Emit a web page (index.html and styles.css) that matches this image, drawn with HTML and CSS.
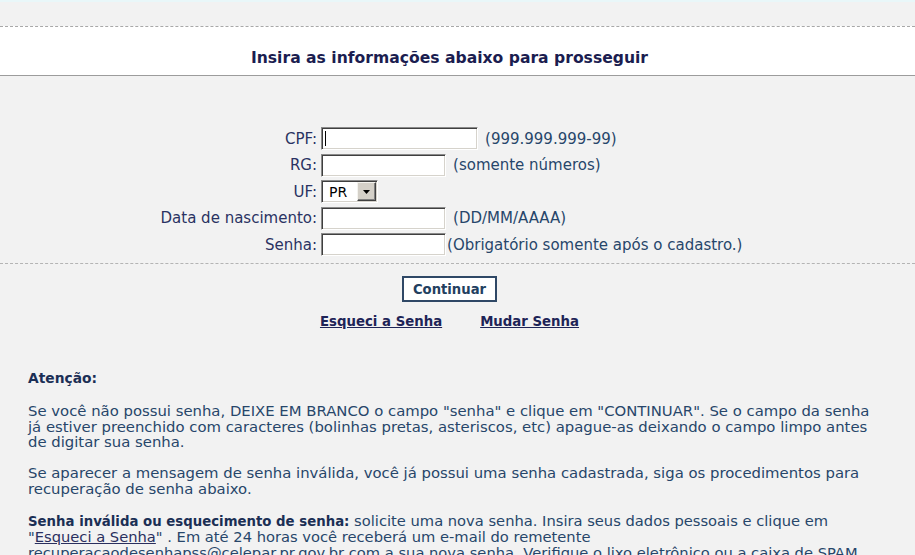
FILE: index.html
```html
<!DOCTYPE html>
<html lang="pt-BR">
<head>
<meta charset="utf-8">
<title>Identificação</title>
<link rel="stylesheet" href="styles.css">
</head>
<body>
<div class="topline"></div>
<div class="page">
  <div class="header">
    <h1 class="title">Insira as informações abaixo para prosseguir</h1>
  </div>

  <form class="form">
    <div class="fields">
      <label class="label" for="cpf">CPF:</label>
      <div class="field"><span class="caret-wrap"><input id="cpf" class="input input-cpf" type="text"></span><span class="hint hint-spaced">(999.999.999-99)</span></div>

      <label class="label" for="rg">RG:</label>
      <div class="field"><input id="rg" class="input input-short" type="text"><span class="hint hint-spaced">(somente números)</span></div>

      <label class="label" for="uf">UF:</label>
      <div class="field">
        <span class="select">
          <select id="uf" class="select-native"><option>PR</option></select>
          <span class="select-btn"><svg width="7" height="4" viewBox="0 0 7 4"><path d="M0 0h7L3.5 4z" fill="#000"/></svg></span>
        </span>
      </div>

      <label class="label" for="nasc">Data de nascimento:</label>
      <div class="field"><input id="nasc" class="input input-short" type="text"><span class="hint hint-spaced">(DD/MM/AAAA)</span></div>

      <label class="label" for="senha">Senha:</label>
      <div class="field"><input id="senha" class="input input-short" type="password"><span class="hint">(Obrigatório somente após o cadastro.)</span></div>
    </div>

    <div class="divider"></div>

    <div class="actions">
      <button type="button" class="btn">Continuar</button>
    </div>

    <div class="links">
      <a href="#" class="link">Esqueci a Senha</a>
      <a href="#" class="link">Mudar Senha</a>
    </div>
  </form>

  <div class="notice">
    <p class="notice-title">Atenção:</p>
    <p>Se você não possui senha, DEIXE EM BRANCO o campo "senha" e clique em "CONTINUAR". Se o campo da senha já estiver preenchido com caracteres (bolinhas pretas, asteriscos, etc) apague-as deixando o campo limpo antes de digitar sua senha.</p>
    <p>Se aparecer a mensagem de senha inválida, você já possui uma senha cadastrada, siga os procedimentos para recuperação de senha abaixo.</p>
    <p class="notice-help"><strong class="notice-strong">Senha inválida ou esquecimento de senha:</strong> solicite uma nova senha. Insira seus dados pessoais e clique em "<a href="#" class="inline-link">Esqueci a Senha</a>" . Em até 24 horas você receberá um e-mail do remetente recuperacaodesenhapss@celepar.pr.gov.br com a sua nova senha. Verifique o lixo eletrônico ou a caixa de SPAM do seu e-mail.</p>
  </div>
</div>
</body>
</html>
```

FILE: styles.css
```css
html, body {
  margin: 0;
  padding: 0;
}

body {
  background: #f2f2f2;
  font-family: Verdana, "DejaVu Sans", sans-serif;
  font-size: 15px;
  color: #27466a;
  overflow: hidden;
}

.topline {
  height: 2px;
  background: #e9f7f9;
}

.page {
  padding-top: 24px;
}

.header {
  background: #ffffff;
  border-top: 1px dashed #a8a8a8;
  border-bottom: 1px solid #9c9c9c;
  height: 48px;
  display: flex;
  align-items: center;
  justify-content: center;
  padding-right: 16px;
}

.title {
  margin: 0;
  padding-top: 13px;
  font-size: 15.6px;
  line-height: 18px;
  font-weight: bold;
  color: #1b1d50;
}

.form {
  margin: 0;
  padding-top: 51px;
}

.fields {
  display: grid;
  grid-template-columns: auto auto;
  grid-auto-rows: 23px;
  justify-content: center;
  column-gap: 4px;
  row-gap: 3.5px;
  padding-right: 12px;
  line-height: 18px;
}

.label {
  text-align: right;
  color: #2a3262;
  align-self: center;
}

.field {
  display: flex;
  align-items: center;
  white-space: nowrap;
}

.input {
  box-sizing: border-box;
  height: 23px;
  margin: 0;
  padding: 1px 3px;
  font-family: inherit;
  font-size: 13px;
  background: #fff;
  border: 1px solid;
  border-color: #8a8a8a #ffffff #ffffff #8a8a8a;
  box-shadow: inset 1px 1px 0 #3f3f3f, inset -1px -1px 0 #d6d3cc;
  outline: none;
}

.input-cpf {
  width: 157px;
}

.input-short {
  width: 125px;
}

.caret-wrap {
  position: relative;
  display: inline-flex;
}

.caret-wrap::after {
  content: "";
  position: absolute;
  left: 4px;
  top: 4px;
  width: 1px;
  height: 15px;
  background: #000;
}

.hint {
  color: #27466a;
  margin-left: 1px;
}

.hint-spaced {
  margin-left: 7px;
}

.select {
  position: relative;
  display: inline-flex;
}

.select-native {
  -webkit-appearance: none;
  appearance: none;
  box-sizing: border-box;
  width: 57px;
  height: 23px;
  margin: 0;
  padding: 0 0 0 7px;
  font-family: inherit;
  font-size: 14px;
  color: #000;
  background: #fff;
  border: 1px solid;
  border-color: #8a8a8a #ffffff #ffffff #8a8a8a;
  box-shadow: inset 1px 1px 0 #3f3f3f, inset -1px -1px 0 #d6d3cc;
  border-radius: 0;
  outline: none;
}

.select-btn {
  position: absolute;
  right: 2px;
  top: 2px;
  box-sizing: border-box;
  width: 19px;
  height: 19px;
  background: #d4d0c8;
  border: 1px solid;
  border-color: #f4f3ef #404040 #404040 #f4f3ef;
  box-shadow: inset -1px -1px 0 #808080;
  display: flex;
  align-items: center;
  justify-content: center;
}

.divider {
  margin-top: 7px;
  border-top: 1px dashed #b4b4b4;
}

.actions {
  display: flex;
  justify-content: center;
  padding-top: 12px;
  padding-right: 16px;
}

.btn {
  box-sizing: border-box;
  height: 26px;
  padding: 0 9px;
  background: #fff;
  border: 2px solid #2f4866;
  border-radius: 0;
  font-family: inherit;
  font-size: 13.2px;
  font-weight: bold;
  color: #22405f;
}

.links {
  display: flex;
  justify-content: center;
  gap: 38px;
  padding-top: 12px;
  padding-right: 16px;
  line-height: 16px;
}

.link {
  font-size: 13.3px;
  font-weight: bold;
  color: #1e2457;
  text-decoration: underline;
}

.notice {
  box-sizing: border-box;
  width: 875px;
  padding: 41px 0 0 28px;
  font-size: 14.85px;
  line-height: 15.5px;
}

.notice p {
  margin: 0 0 15.5px;
}

.notice .notice-title {
  margin-bottom: 17.5px;
  font-size: 13.8px;
  font-weight: bold;
  color: #1b2f55;
}

.notice-help {
  font-size: 14.7px;
}

.notice-strong {
  font-size: 13.3px;
  color: #1b2f55;
}

.inline-link {
  color: #2a2f5e;
  text-decoration: underline;
}
```
